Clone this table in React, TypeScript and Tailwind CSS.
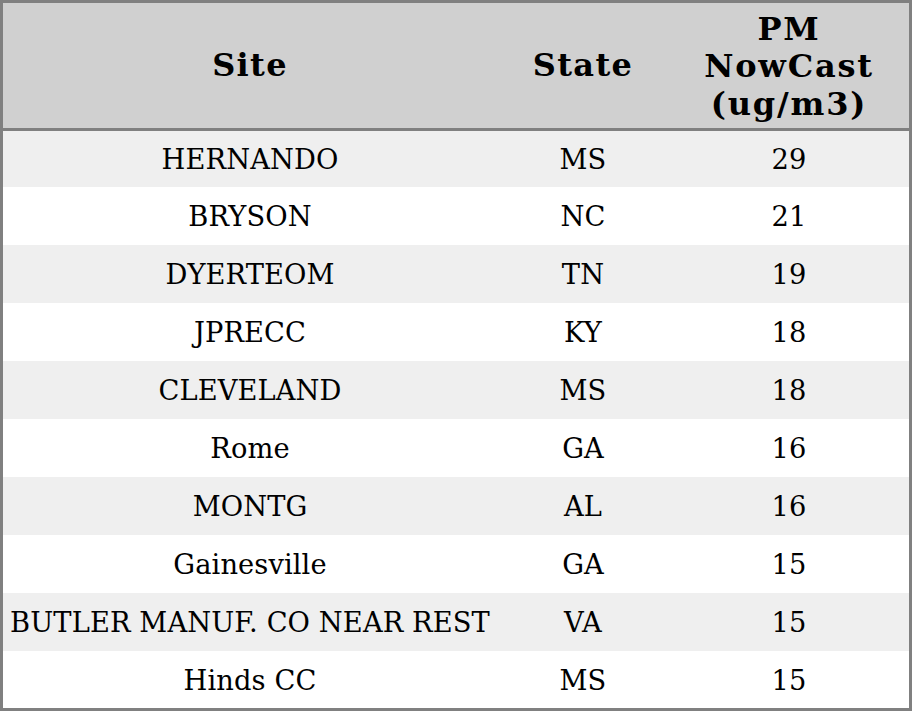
const rows = [
  { site: "HERNANDO", state: "MS", value: 29 },
  { site: "BRYSON", state: "NC", value: 21 },
  { site: "DYERTEOM", state: "TN", value: 19 },
  { site: "JPRECC", state: "KY", value: 18 },
  { site: "CLEVELAND", state: "MS", value: 18 },
  { site: "Rome", state: "GA", value: 16 },
  { site: "MONTG", state: "AL", value: 16 },
  { site: "Gainesville", state: "GA", value: 15 },
  { site: "BUTLER MANUF. CO NEAR REST", state: "VA", value: 15 },
  { site: "Hinds CC", state: "MS", value: 15 },
];

const cols = "grid grid-cols-[494px_172px_240px]";

export default function App() {
  return (
    <div className="w-[912px] h-[711px] bg-white font-['DejaVu_Serif',serif] text-black">
      <div className="border-[3px] border-[#808080]">
        <div className={`${cols} h-[128px] bg-[#d0d0d0] border-b-[3px] border-[#808080] text-[32px] font-bold leading-[37.3px] tracking-[1.3px]`}>
          <div className="flex items-center justify-center text-center">Site</div>
          <div className="flex items-center justify-center text-center">State</div>
          <div className="flex items-center justify-center text-center pt-[3px] tracking-[1.8px]">
            PM
            <br />
            NowCast
            <br />
            (ug/m3)
          </div>
        </div>
        {rows.map((r, i) => (
          <div
            key={i}
            className={`${cols} text-[27.3px] tracking-[0.1px] ${i % 2 === 0 ? "bg-[#efefef]" : "bg-white"} ${
              i === 0 ? "h-[56px]" : i === rows.length - 1 ? "h-[57px]" : "h-[58px]"
            }`}
          >
            <div className="flex items-center justify-center whitespace-nowrap pt-[3px]">{r.site}</div>
            <div className="flex items-center justify-center pt-[3px]">{r.state}</div>
            <div className="flex items-center justify-center pt-[3px]">{r.value}</div>
          </div>
        ))}
      </div>
    </div>
  );
}
